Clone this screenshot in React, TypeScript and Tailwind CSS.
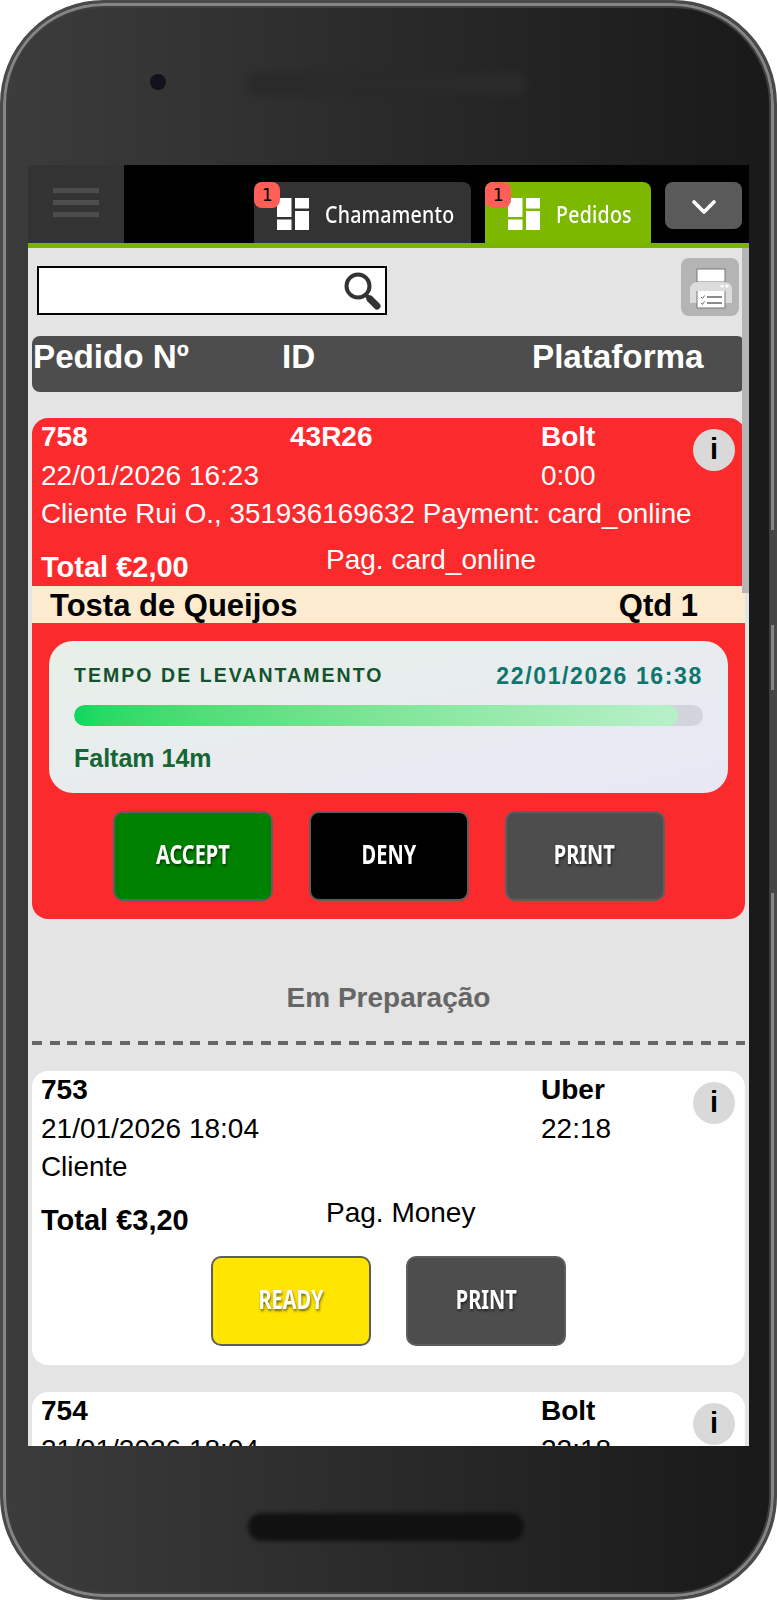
import React from "react";
import { ChevronDown } from "lucide-react";

const sans = "font-['Liberation_Sans',Arial,sans-serif]";

function TileIcon() {
  return (
    <svg viewBox="0 0 32 32" className="w-8 h-8 flex-shrink-0" fill="#fff">
      <rect x="0" y="0" width="14.5" height="19" />
      <rect x="0" y="21.5" width="14.5" height="10.5" />
      <rect x="18" y="0" width="14" height="10.5" />
      <rect x="18" y="13" width="14" height="19" />
    </svg>
  );
}

function Tab({ label, active, width }: { label: string; active?: boolean; width: string }) {
  return (
    <div className={`relative flex items-center h-[61px] rounded-t-lg pl-[23px] ${width} ${active ? "bg-[#7cb800]" : "bg-[#333333]"}`}>
      <div className="mt-[3px]"><TileIcon /></div>
      <span className="ml-4 mt-[2px] text-white text-[24px] font-medium tracking-[0.3px] font-['Noto_Sans',sans-serif] origin-left scale-x-[0.815] whitespace-nowrap">{label}</span>
      <span className="absolute left-0 top-0 w-[26px] h-[26px] rounded-lg bg-[#ff5f57] text-black text-[18px] leading-[26px] text-center font-['DejaVu_Sans_Mono',monospace]">
        1
      </span>
    </div>
  );
}

function SearchIcon() {
  return (
    <svg viewBox="0 0 40 40" className="w-10 h-10" fill="none" stroke="#333">
      <circle cx="16" cy="15" r="11.5" strokeWidth="4" />
      <path d="M24 24l3 3" strokeWidth="4" />
      <path d="M28 28l7 7" strokeWidth="7" strokeLinecap="round" />
    </svg>
  );
}

function PrinterIcon() {
  return (
    <svg viewBox="0 0 58 58" className="w-[58px] h-[58px]">
      <rect x="16" y="11" width="28" height="13" fill="#fff" stroke="#777" strokeWidth="1" />
      <path d="M9 45V32q0-8 8-8h26q8 0 8 8v13z" fill="#dcdcdc" />
      <circle cx="41" cy="28" r="1.6" fill="#fff" />
      <circle cx="46" cy="28" r="1.6" fill="#fff" />
      <path d="M16 33h28v17h-28z" fill="#fff" />
      <path d="M16 33v17h28v-17" fill="none" stroke="#777" strokeWidth="1" />
      <path d="M26 39h15M26 45h15" stroke="#666" strokeWidth="1.5" />
      <path d="M20 39l1.5 1.5 2-3M20 45l1.5 1.5 2-3" stroke="#666" strokeWidth="1" fill="none" />
    </svg>
  );
}

function ActionButton({ label, color }: { label: string; color: string }) {
  return (
    <button className={`w-[160px] h-[90px] rounded-[10px] border-2 border-[#5e5e5e] flex items-center justify-center pb-1 ${color}`}>
      <span className="text-white text-[27px] font-bold font-['Noto_Sans',sans-serif] scale-x-[0.74] [text-shadow:1px_2px_3px_rgba(0,0,0,0.55)]">{label}</span>
    </button>
  );
}

function OrderHead({ num, code, platform, date, time, client, total, pay, light }: {
  num: string; code?: string; platform: string; date: string; time: string; client: string; total: string; pay: string; light?: boolean;
}) {
  return (
    <div className={`relative pl-[9px] ${light ? "text-white" : "text-black"}`}>
      <div className="h-[38px] flex items-end font-bold text-[28px] leading-[38px]">
        <span className="w-[249px]">{num}</span>
        <span className="w-[251px]">{code}</span>
        <span>{platform}</span>
      </div>
      <div className="h-[39px] flex items-end text-[28px] leading-[38px]">
        <span className="w-[500px]">{date}</span>
        <span>{time}</span>
      </div>
      <div className="h-[38px] flex items-end text-[27.8px] leading-[38px] whitespace-nowrap">{client}</div>
      <div className="h-[52px] flex">
        <span className="w-[285px] mt-[15px] font-bold text-[29px] leading-[38px]">{total}</span>
        <span className="mt-[8px] text-[28px] leading-[38px]">{pay}</span>
      </div>
      <span className="absolute right-[10px] top-[11px] w-[42px] h-[42px] rounded-full bg-[#d9d9d9] text-black text-[29px] font-bold flex items-center justify-center">i</span>
    </div>
  );
}

export default function App() {
  return (
    <div className={`relative w-[777px] h-[1600px] bg-white overflow-hidden ${sans}`}>
      <div className="relative w-full h-full rounded-[104px] border-[3px] border-[#4a4a4a] shadow-[inset_0_0_0_3px_#858585,inset_0_0_0_5px_#3e3e3e] bg-gradient-to-r from-[#3c3c3c] to-[#191919] overflow-hidden flex flex-col">
        {/* top bezel */}
        <div className="h-[162px] flex-shrink-0 flex items-start pt-[69px] pl-[147px]">
          <div className="w-4 h-4 rounded-full bg-[#12121f] mt-[2px]" />
          <div className="ml-[81px] w-[280px] h-6 rounded-full bg-[#2a2a2a] blur-[3px]" />
        </div>

        {/* screen */}
        <div className="mx-[25px] h-[1281px] flex-shrink-0 bg-[#e4e4e4] overflow-hidden flex flex-col relative">
          <header className="h-[78px] flex-shrink-0 bg-black flex items-end">
            <div className="w-[96px] h-full bg-[#333333] flex flex-col items-center justify-center gap-[7px] pb-[3px]">
              <span className="w-[46px] h-[5px] bg-[#4d4d4d]" />
              <span className="w-[46px] h-[5px] bg-[#4d4d4d]" />
              <span className="w-[46px] h-[5px] bg-[#4d4d4d]" />
            </div>
            <div className="ml-[130px]"><Tab label="Chamamento" width="w-[217px]" /></div>
            <div className="ml-[14px]"><Tab label="Pedidos" active width="w-[166px]" /></div>
            <div className="ml-[14px] mb-[14px] w-[77px] h-[47px] rounded-lg bg-[#5a5a5a] flex items-center justify-center">
              <ChevronDown className="w-10 h-10 text-white mt-[3px]" strokeWidth={2.2} />
            </div>
          </header>
          <div className="h-[5px] flex-shrink-0 bg-[#78b500]" />

          {/* scrollbar */}
          <div className="absolute right-0 top-[83px] w-[7px] h-[345px] bg-[#b5b5b5]" />

          <main className="flex-1 pl-1 pr-[4px]">
            <div className="h-[88px] flex items-start">
              <div className="ml-[5px] mt-[18px] w-[350px] h-[49px] border-2 border-black bg-white flex items-center justify-end pr-[3px]">
                <SearchIcon />
              </div>
              <div className="ml-[294px] mt-[10px] w-[58px] h-[58px] rounded-lg bg-[#b4b4b4]"><PrinterIcon /></div>
            </div>

            <div className="w-[713px] h-[56px] rounded-lg bg-[#4d4d4d] text-white font-bold text-[33.2px] leading-[42px] flex pl-[1px]">
              <span className="w-[249px]">Pedido Nº</span>
              <span className="w-[250px]">ID</span>
              <span>Plataforma</span>
            </div>

            {/* red order */}
            <section className="mt-[26px] w-[713px] h-[501px] rounded-2xl bg-[#fb2a2d] overflow-hidden">
              <OrderHead light num="758" code="43R26" platform="Bolt" date="22/01/2026 16:23" time="0:00"
                client="Cliente Rui O., 351936169632 Payment: card_online" total="Total €2,00" pay="Pag. card_online" />
              <div className="mt-[1px] h-[37px] bg-[#fdebd0] text-black font-bold text-[31px] flex items-center justify-between pt-[3px] pl-[18px] pr-[47px]">
                <span>Tosta de Queijos</span>
                <span>Qtd 1</span>
              </div>
              <div className="mt-[18px] mx-[17px] h-[152px] rounded-3xl bg-gradient-to-br from-[#e8f0e8] to-[#e8e8f5] px-[25px] pt-[22px]">
                <div className="flex justify-between items-center h-[26px] font-bold">
                  <span className="text-[19.5px] tracking-[2.05px] text-[#14532d]">TEMPO DE LEVANTAMENTO</span>
                  <span className="text-[23px] tracking-[1.65px] text-[#0f766e]">22/01/2026 16:38</span>
                </div>
                <div className="mt-[16px] h-[21px] rounded-full bg-[#d1d5db] overflow-hidden">
                  <div className="h-full rounded-full bg-gradient-to-r from-[#0bd85f] to-[#b9f0c9]" style={{ width: "96%" }} />
                </div>
                <div className="mt-[14px] text-[25px] font-bold text-[#166534]">Faltam 14m</div>
              </div>
              <div className="mt-[18px] flex justify-center gap-[36px]">
                <ActionButton label="ACCEPT" color="bg-[#008000]" />
                <ActionButton label="DENY" color="bg-black" />
                <ActionButton label="PRINT" color="bg-[#4d4d4d]" />
              </div>
            </section>

            <h2 className="mt-[58px] h-[38px] w-[713px] text-center text-[28px] font-bold text-[#666666]">Em Preparação</h2>
            <div className="mt-[26px] w-[713px] h-1 bg-[repeating-linear-gradient(90deg,#666666_0_10px,transparent_10px_17.6px)]" />

            <section className="mt-[26px] w-[713px] h-[294px] rounded-2xl bg-white">
              <OrderHead num="753" platform="Uber" date="21/01/2026 18:04" time="22:18" client="Cliente" total="Total €3,20" pay="Pag. Money" />
              <div className="mt-[18px] flex justify-center gap-[35px]">
                <ActionButton label="READY" color="bg-[#ffe500]" />
                <ActionButton label="PRINT" color="bg-[#4d4d4d]" />
              </div>
            </section>

            <section className="mt-[27px] w-[713px] h-[200px] rounded-2xl bg-white">
              <OrderHead num="754" platform="Bolt" date="21/01/2026 18:04" time="22:18" client="Cliente" total="Total €3,20" pay="Pag. Money" />
            </section>
          </main>
        </div>

        {/* bottom bezel */}
        <div className="flex-1 flex items-start justify-center pt-[67px] pr-[6px]">
          <div className="w-[276px] h-[28px] rounded-full bg-[#111111] blur-[2px]" />
        </div>
      </div>

      {/* side buttons on the rim */}
      <span className="absolute right-0 top-[530px] w-[7px] h-[95px] bg-[#454545]" />
      <span className="absolute right-0 top-[690px] w-[7px] h-[203px] bg-[#454545]" />
    </div>
  );
}
